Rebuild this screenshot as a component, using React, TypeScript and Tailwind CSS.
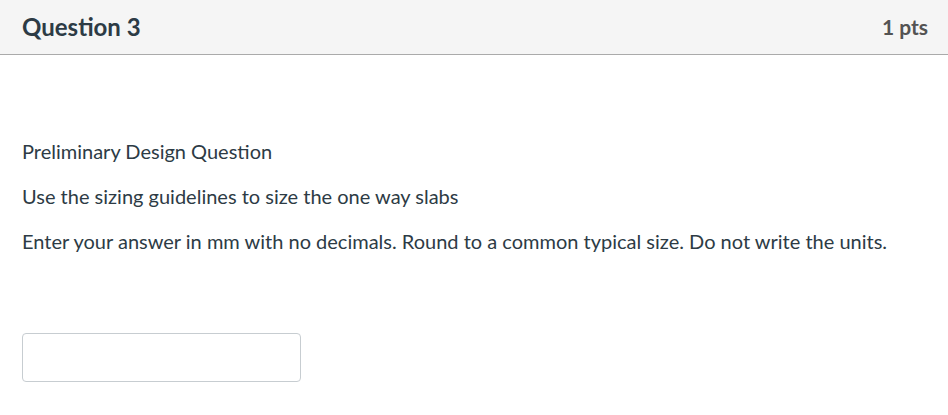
export default function App() {
  return (
    <div className="w-[948px] h-[415px] bg-white text-[#2d3b45] font-['Lato','Liberation_Sans',sans-serif] overflow-hidden">
      <div className="h-[55px] bg-[#f5f5f5] border-b border-[#aaaaaa] flex items-center justify-between pl-[22px] pr-[20px]">
        <h2 className="text-[24px] font-bold">Question 3</h2>
        <div className="text-[21px] font-bold text-[#535353]">1 pts</div>
      </div>
      <div className="pl-[22px] pt-[81px] text-[20px] leading-[30px]">
        <p className="mb-[15px]">Preliminary Design Question</p>
        <p className="mb-[15px]">Use the sizing guidelines to size the one way slabs</p>
        <p>Enter your answer in mm with no decimals. Round to a common typical size. Do not write the units.</p>
        <input
          type="text"
          className="mt-[77px] w-[279px] h-[49px] border border-[#c7cdd1] rounded-[4px] bg-white outline-none"
        />
      </div>
    </div>
  );
}
